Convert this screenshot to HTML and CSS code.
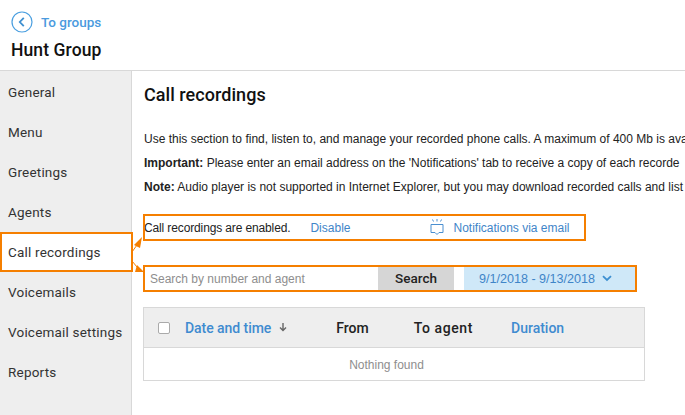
FILE: index.html
```html
<!DOCTYPE html>
<html lang="en">
<head>
  <meta charset="UTF-8" />
  <title>Hunt Group</title>
  <link rel="stylesheet" href="styles.css">
</head>
<body>

  <header class="top">
    <a class="back" href="#">
      <svg width="22" height="22" viewBox="0 0 22 22" fill="none">
        <circle cx="11" cy="11" r="10" stroke="#4a9fe0" stroke-width="1.2"/>
        <path d="M12.8 6.8 L8.8 11 L12.8 15.2" stroke="#3d8fd0" stroke-width="1.8"/>
      </svg>
      <span>To groups</span>
    </a>
    <div class="group-name">Hunt Group</div>
  </header>

  <div class="layout">
    <nav class="sidebar">
      <a href="#">General</a>
      <a href="#">Menu</a>
      <a href="#">Greetings</a>
      <a href="#">Agents</a>
      <a href="#" class="active">Call recordings</a>
      <a href="#">Voicemails</a>
      <a href="#">Voicemail settings</a>
      <a href="#">Reports</a>
    </nav>

    <main class="content">
      <h1>Call recordings</h1>

      <p>Use this section to find, listen to, and manage your recorded phone calls. A maximum of 400 Mb is ava</p>
      <p><b>Important:</b> Please enter an email address on the 'Notifications' tab to receive a copy of each recorde</p>
      <p><b>Note:</b> Audio player is not supported in Internet Explorer, but you may download recorded calls and list</p>

      <div class="status">
        <span class="status-text">Call recordings are enabled.</span>
        <a href="#" class="disable">Disable</a>
        <svg class="bell" width="14" height="17" viewBox="0 0 14 17" fill="none" stroke="#4a8fd0">
          <path d="M1 5.5 H13 V13.5 H9 L7 15.5 L5 13.5 H1 Z"/>
          <path d="M2.5 0.5 L3.5 2.5 M7 0 V2.5 M11.5 0.5 L10.5 2.5"/>
        </svg>
        <a href="#" class="notify">Notifications via email</a>
      </div>

      <div class="search">
        <input type="text" placeholder="Search by number and agent" />
        <button>Search</button>
        <div class="dates">
          <span>9/1/2018 - 9/13/2018</span>
          <svg width="10" height="7" viewBox="0 0 10 7" fill="none">
            <path d="M1 1.2 L5 5 L9 1.2" stroke="#3d8fd0" stroke-width="1.8"/>
          </svg>
        </div>
      </div>

      <div class="table">
        <div class="thead">
          <span class="check"></span>
          <a href="#" class="col-date">Date and time</a>
          <svg class="sort" width="8" height="9" viewBox="0 0 8 9" fill="none">
            <path d="M4 0 V7 M1 4.5 L4 7.5 L7 4.5" stroke="#666" stroke-width="1.4"/>
          </svg>
          <span class="col-from">From</span>
          <span class="col-agent">To agent</span>
          <a href="#" class="col-duration">Duration</a>
        </div>
        <div class="empty">Nothing found</div>
      </div>
    </main>
  </div>

  <!-- orange annotations drawn over the screenshot -->
  <div class="mark mark-nav"></div>
  <div class="mark mark-status"></div>
  <div class="mark mark-search"></div>
  <svg class="arrows" width="14" height="44" viewBox="0 0 14 44" fill="#f57f00">
    <path d="M0 20 L5 13" stroke="#f57f00" stroke-width="1"/>
    <path d="M10 5 L2 13 L8 16 Z"/>
    <path d="M0 29 L5 35" stroke="#f57f00" stroke-width="1"/>
    <path d="M12 40 L5 33 L3 40 Z"/>
  </svg>

</body>
</html>
```

FILE: styles.css
```css
* {
  margin: 0;
  padding: 0;
  box-sizing: border-box;
}

html, body {
  height: 415px;
  overflow: hidden;
}

body {
  font-family: Tahoma, "Liberation Sans", Arial, sans-serif;
  font-size: 12px;
  color: #222;
  background: #fff;
  position: relative;
}

a {
  text-decoration: none;
}

.top {
  height: 71px;
  padding: 11px 0 0 11px;
  border-bottom: 1px solid #d8d8d8;
}

.back {
  display: flex;
  align-items: center;
  gap: 8px;
  height: 22px;
  color: #4a9ade;
  font-family: Roboto, sans-serif;
  font-weight: 500;
  font-size: 13.5px;
}

.group-name {
  margin-top: 7px;
  font-family: Roboto, sans-serif;
  font-weight: 500;
  font-size: 17.5px;
  letter-spacing: 0.1px;
  line-height: 20px;
  color: #111;
}

.layout {
  display: flex;
  height: 344px;
}

.sidebar {
  width: 132px;
  flex-shrink: 0;
  padding-top: 1px;
  background: #eee;
  border-right: 1px solid #d8d8d8;
}

.sidebar a {
  display: block;
  height: 40px;
  line-height: 40px;
  padding-left: 8px;
  font-family: Roboto, sans-serif;
  font-size: 13.5px;
  letter-spacing: 0.2px;
  color: #333;
  white-space: nowrap;
}

.sidebar a.active {
  background: #fff;
  margin-right: -1px;
}

.content {
  flex: 1;
  padding: 13px 0 0 12px;
  min-width: 0;
  overflow: hidden;
}

h1 {
  font-family: Roboto, sans-serif;
  font-weight: 500;
  font-size: 18px;
  letter-spacing: 0.05px;
  line-height: 22px;
  color: #111;
  margin-bottom: 21px;
}

p {
  font-size: 12px;
  line-height: 24px;
  white-space: nowrap;
}

.status {
  display: flex;
  align-items: center;
  height: 26px;
  margin-top: 15px;
  padding-top: 1px;
  white-space: nowrap;
}

.status a {
  color: #3f85c8;
}

.status-text {
  letter-spacing: -0.13px;
}

.disable {
  margin-left: 20px;
}

.bell {
  margin-left: 80px;
}

.notify {
  margin-left: 9px;
}

.search {
  display: flex;
  align-items: stretch;
  width: 494px;
  height: 26px;
  margin: 25px 0 0 -1px;
}

.search input {
  width: 235px;
  padding: 2px 0 0 7px;
  border: none;
  outline: none;
  font-family: inherit;
  font-size: 12px;
}

.search input::placeholder {
  color: #8e8e8e;
}

.search button {
  width: 76px;
  border: none;
  background: #d6d6d6;
  color: #222;
  font-family: Roboto, sans-serif;
  font-size: 13.5px;
  font-weight: 500;
}

.dates {
  display: flex;
  align-items: center;
  justify-content: center;
  gap: 7px;
  flex: 1;
  margin-left: 10px;
  padding: 1px 10px 0 0;
  background: #cfe8f8;
  color: #3f85c8;
  font-size: 12.6px;
}

.table {
  width: 502px;
  margin: 16px 0 0 -1px;
  border: 1px solid #d8d8d8;
}

.thead {
  display: flex;
  align-items: center;
  height: 40px;
  background: #eee;
  border-bottom: 1px solid #d8d8d8;
  font-family: Roboto, sans-serif;
  font-weight: 500;
  font-size: 14px;
  color: #222;
}

.thead a {
  color: #3f8bd0;
}

.check {
  width: 12px;
  height: 12px;
  margin-left: 14px;
  background: #fff;
  border: 1px solid #aaa;
  border-radius: 2px;
}

.col-date {
  margin-left: 15px;
  letter-spacing: -0.05px;
}

.sort {
  margin-left: 8px;
}

.col-from {
  margin-left: 49px;
}

.col-agent {
  margin-left: 45px;
  letter-spacing: 0.6px;
}

.col-duration {
  margin-left: 38px;
}

.empty {
  height: 32px;
  line-height: 34px;
  padding-right: 15px;
  text-align: center;
  color: #8e8e8e;
}

.mark {
  position: absolute;
  border: 2px solid #f57f00;
}

.mark-nav {
  left: 0;
  top: 232px;
  width: 133px;
  height: 40px;
}

.mark-status {
  left: 143px;
  top: 214px;
  width: 443px;
  height: 27px;
}

.mark-search {
  left: 143px;
  top: 265px;
  width: 494px;
  height: 27px;
}

.arrows {
  position: absolute;
  left: 132px;
  top: 232px;
}
```
